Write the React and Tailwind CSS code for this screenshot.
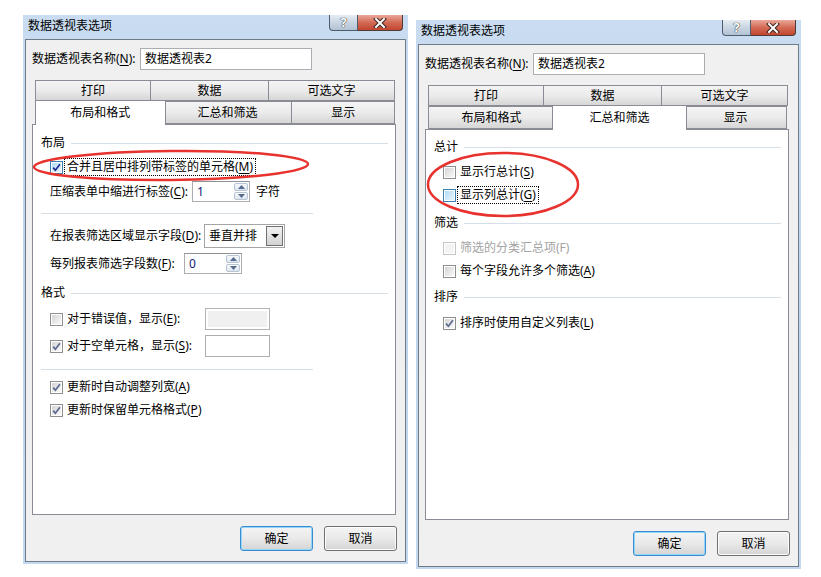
import React from 'react';

const Mn = ({ children }) => (
  <span className="underline underline-offset-[2px]">{children}</span>
);

function Box({ checked, hover, disabled }) {
  const outer = disabled ? 'border-[#c6c6c6]' : hover ? 'border-[#3c7fb1]' : 'border-[#8e8f8f]';
  const inner = disabled
    ? 'bg-[#f4f4f4]'
    : hover
    ? 'bg-linear-to-br from-[#b4dcf5] to-[#e8f5fd]'
    : 'bg-linear-to-br from-[#d4d4d4] to-[#fafafa]';
  return (
    <span className={`w-[13px] h-[13px] shrink-0 border ${outer} bg-white p-[1px] flex`}>
      <span className={`flex-1 flex ${inner}`}>
        {checked && (
          <svg viewBox="0 0 9 9" className="w-full h-full">
            <path
              d="M1.2 4.6 L3.4 7.2 L7.9 1.3"
              fill="none"
              stroke={hover ? '#1c2b8f' : '#5a6990'}
              strokeWidth="1.7"
            />
          </svg>
        )}
      </span>
    </span>
  );
}

function CheckRow({ checked, hover, focus, disabled, className, children }) {
  return (
    <div className={`flex items-center h-[20px] pl-[17px] ${className}`}>
      <Box checked={checked} hover={hover} disabled={disabled} />
      <span
        className={`ml-[1px] px-[2px] leading-[16px] border ${
          focus ? 'border-dotted border-black' : 'border-transparent'
        } ${disabled ? 'text-[#a3a3a3]' : ''}`}
      >
        {children}
      </span>
    </div>
  );
}

function Group({ title, className }) {
  return (
    <div className={`flex items-center h-[20px] pl-[8px] pr-[7px] ${className}`}>
      <span>{title}</span>
      <span className="flex-1 h-px bg-[#d5dfe5] ml-[6px]" />
    </div>
  );
}

const Sep = ({ className }) => (
  <div className={`ml-[8px] w-[272px] h-px bg-[#d5dfe5] ${className}`} />
);

function SpinBtn({ up }) {
  return (
    <span className="flex-1 flex items-center justify-center rounded-[2px] border border-[#b6c5d6] bg-linear-to-b from-[#f7f9fb] to-[#dfe6ee]">
      <svg width="7" height="4" viewBox="0 0 7 4">
        <path d={up ? 'M0 4 L3.5 0 L7 4 Z' : 'M0 0 L3.5 4 L7 0 Z'} fill="#56698e" />
      </svg>
    </span>
  );
}

function Spin({ value }) {
  return (
    <div className="flex w-[58px] h-[21px] border border-[#abadb3] border-t-[#8e9197] bg-white">
      <span className="flex-1 pl-[4px] leading-[19px] text-[#14207a]">{value}</span>
      <div className="w-[16px] flex flex-col gap-[1px] p-[1px]">
        <SpinBtn up />
        <SpinBtn />
      </div>
    </div>
  );
}

function Tab({ label, w, selected, first }) {
  if (selected) {
    return (
      <div
        className={`${w} ${first ? '' : '-ml-[3px]'} -mr-[2px] -mt-[1px] h-[25px] self-start relative z-10 bg-white border border-b-0 border-[#898c95] flex items-center justify-center`}
      >
        {label}
      </div>
    );
  }
  return (
    <div
      className={`${w} ${first ? '' : '-ml-px'} h-full border border-[#898c95] bg-linear-to-b from-[#f4f4f4] via-[#ebebeb] to-[#d6d6d6] flex items-center justify-center`}
    >
      {label}
    </div>
  );
}

function Btn({ children, focus }) {
  return (
    <div
      className={`w-[73px] h-[25px] rounded-[3px] border ${
        focus ? 'border-[#3c8ad0] shadow-[inset_0_0_0_1px_#8fd8fb]' : 'border-[#707070] shadow-[inset_0_0_0_1px_#fcfcfc]'
      } bg-linear-to-b from-[#f4f4f4] via-[#e9e9e9] to-[#d4d4d4] flex items-center justify-center`}
    >
      {children}
    </div>
  );
}

function TitleBar() {
  return (
    <div className="h-[24px] flex items-start">
      <span className="pl-[3px] pt-[3px] leading-[16px] flex-1">数据透视表选项</span>
      <div className="flex mr-[3px]">
        <div className="w-[29px] h-[16px] rounded-bl-[4px] border border-t-0 border-[#4e5d6e] bg-linear-to-b from-[#e6ecf2] via-[#c9d5e2] to-[#b3c2d3] flex items-center justify-center text-white font-bold text-[13px] leading-none [text-shadow:0_0_1px_#222,0_0_1px_#222]">
          ?
        </div>
        <div className="w-[45px] h-[16px] rounded-br-[4px] border border-t-0 border-l-0 border-[#4e3a36] bg-linear-to-b from-[#e9a899] via-[#d36a55] to-[#c2452f] flex items-center justify-center">
          <svg width="14" height="10" viewBox="0 0 14 10">
            <path d="M3 1 L11 9 M11 1 L3 9" stroke="#3a2420" strokeWidth="4" strokeLinecap="square" />
            <path d="M3 1 L11 9 M11 1 L3 9" stroke="#ffffff" strokeWidth="2" strokeLinecap="square" />
          </svg>
        </div>
      </div>
    </div>
  );
}

function Dialog({ className, selected, children }) {
  return (
    <div
      className={`w-[385px] px-[2px] pb-[2px] flex flex-col bg-linear-to-b from-[#c9dcf1] via-[#bdd4ec] to-[#c3d9f0] ${className}`}
    >
      <TitleBar />
      <div className="border border-[#6f7b88] bg-[#f0f0f0] pl-[6px] pr-[8px] pt-[8px] pb-[10px] flex flex-col">
        <div className="flex items-center h-[22px]">
          <span className="w-[108px]">
            数据透视表名称(<Mn>N</Mn>):
          </span>
          <div className="w-[172px] h-[22px] border border-[#abadb3] bg-white pl-[4px] leading-[20px]">
            数据透视表2
          </div>
        </div>
        <div className="ml-[3px] mt-[10px] w-[360px] flex flex-col">
          <div className="flex h-[21px]">
            <Tab first w="w-[116px]" label="打印" />
            <Tab w="w-[119px]" label="数据" />
            <Tab w="w-[127px]" label="可选文字" />
          </div>
          {selected === 0 ? (
            <div className="flex h-[23px]">
              <Tab first selected w="w-[131px]" label="布局和格式" />
              <Tab w="w-[130px]" label="汇总和筛选" />
              <Tab w="w-[104px]" label="显示" />
            </div>
          ) : (
            <div className="flex h-[23px]">
              <Tab first w="w-[127px]" label="布局和格式" />
              <Tab selected w="w-[135px]" label="汇总和筛选" />
              <Tab w="w-[103px]" label="显示" />
            </div>
          )}
        </div>
        <div className="w-[364px] h-[391px] border border-[#898c95] bg-white flex flex-col">
          {children}
        </div>
        <div className="flex justify-end gap-[11px] mt-[11px]">
          <Btn focus>确定</Btn>
          <Btn>取消</Btn>
        </div>
      </div>
    </div>
  );
}

export default function App() {
  return (
    <div className="relative w-[821px] h-[577px] bg-white flex items-start text-[12px] text-black font-['Noto_Sans','Noto_Sans_CJK_SC',sans-serif] leading-[16px] overflow-hidden">
      <Dialog className="mt-[15px] ml-[23px]" selected={0}>
        <Group title="布局" className="mt-[8px]" />
        <CheckRow checked hover focus className="mt-[4px]">
          合并且居中排列带标签的单元格(<Mn>M</Mn>)
        </CheckRow>
        <div className="flex items-center h-[21px] pl-[17px] mt-[4px]">
          <span className="w-[142px]">
            压缩表单中缩进行标签(<Mn>C</Mn>):
          </span>
          <Spin value="1" />
          <span className="ml-[6px]">字符</span>
        </div>
        <Sep className="mt-[11px]" />
        <div className="flex items-center h-[24px] pl-[17px] mt-[10px]">
          <span className="w-[154px]">
            在报表筛选区域显示字段(<Mn>D</Mn>):
          </span>
          <div className="w-[81px] h-[24px] border border-[#a5a5a5] bg-white flex p-[1px]">
            <span className="flex-1 pl-[3px] leading-[20px]">垂直并排</span>
            <span className="w-[17px] border border-[#707070] bg-linear-to-b from-[#f3f3f3] to-[#d2d2d2] flex items-center justify-center">
              <svg width="8" height="4" viewBox="0 0 8 4">
                <path d="M0 0 L8 0 L4 4 Z" fill="#000" />
              </svg>
            </span>
          </div>
        </div>
        <div className="flex items-center h-[21px] pl-[17px] mt-[5px]">
          <span className="w-[134px]">
            每列报表筛选字段数(<Mn>F</Mn>):
          </span>
          <Spin value="0" />
        </div>
        <Group title="格式" className="mt-[9px]" />
        <div className="flex items-center h-[22px] mt-[5px]">
          <CheckRow className="w-[172px]">
            对于错误值，显示(<Mn>E</Mn>):
          </CheckRow>
          <div className="w-[65px] h-[22px] border border-[#b4b4b4] bg-white p-[2px] flex">
            <span className="flex-1 bg-[#f0f0f0]" />
          </div>
        </div>
        <div className="flex items-center h-[22px] mt-[5px]">
          <CheckRow checked className="w-[172px]">
            对于空单元格，显示(<Mn>S</Mn>):
          </CheckRow>
          <div className="w-[65px] h-[22px] border border-[#abadb3] bg-white" />
        </div>
        <Sep className="mt-[12px]" />
        <CheckRow checked className="mt-[7px]">
          更新时自动调整列宽(<Mn>A</Mn>)
        </CheckRow>
        <CheckRow checked className="mt-[3px]">
          更新时保留单元格格式(<Mn>P</Mn>)
        </CheckRow>
      </Dialog>

      <Dialog className="mt-[20px] ml-[8px]" selected={1}>
        <Group title="总计" className="mt-[7px]" />
        <CheckRow className="mt-[5px]">
          显示行总计(<Mn>S</Mn>)
        </CheckRow>
        <CheckRow hover focus className="mt-[3px]">
          显示列总计(<Mn>G</Mn>)
        </CheckRow>
        <Group title="筛选" className="mt-[8px]" />
        <CheckRow disabled className="mt-[5px]">
          筛选的分类汇总项(F)
        </CheckRow>
        <CheckRow className="mt-[3px]">
          每个字段允许多个筛选(<Mn>A</Mn>)
        </CheckRow>
        <Group title="排序" className="mt-[6px]" />
        <CheckRow checked className="mt-[6px]">
          排序时使用自定义列表(<Mn>L</Mn>)
        </CheckRow>
      </Dialog>

      <svg className="absolute inset-0 pointer-events-none" width="821" height="577">
        <ellipse cx="171" cy="165.5" rx="137" ry="14.5" fill="none" stroke="#e8322e" strokeWidth="2.5" transform="rotate(-0.6 171 165.5)" />
        <ellipse cx="503" cy="184.5" rx="75" ry="31.5" fill="none" stroke="#e8322e" strokeWidth="2.5" />
      </svg>
    </div>
  );
}
